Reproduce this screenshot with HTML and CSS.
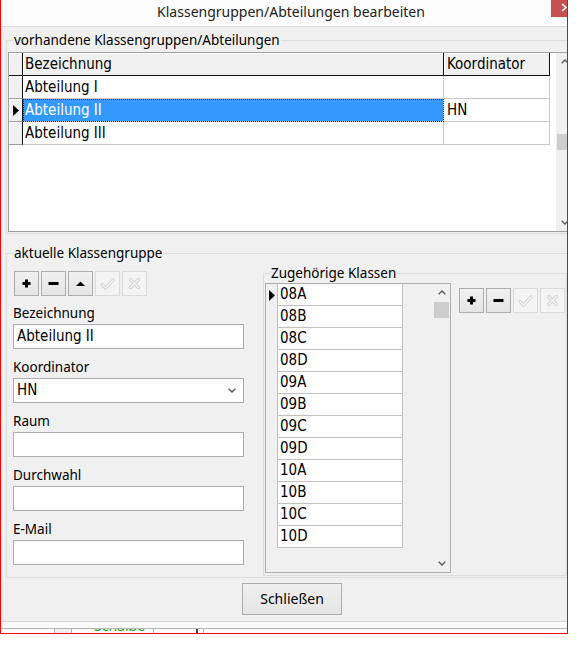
FILE: index.html
```html
<!DOCTYPE html>
<html lang="de">
<head>
<meta charset="utf-8">
<title>Klassengruppen/Abteilungen bearbeiten</title>
<link rel="stylesheet" href="styles.css">
</head>
<body>
<div class="window">
  <div class="titlebar">
    <div class="title">Klassengruppen/Abteilungen bearbeiten</div>
    <div class="close"><svg width="16" height="17" viewBox="0 0 16 17"><polyline points="11,4 15,7.5 11,11" fill="none" stroke="#fff" stroke-width="1.6"/></svg></div>
  </div>

  <div class="client">
    <div class="group g1">
      <span class="glabel">vorhandene Klassengruppen/Abteilungen</span>
      <div class="grid">
        <div class="grid-data">
          <div class="grow ghead"><div class="ind"></div><div class="c1">Bezeichnung</div><div class="c2">Koordinator</div></div>
          <div class="grow"><div class="ind"></div><div class="c1">Abteilung I</div><div class="c2"></div></div>
          <div class="grow sel"><div class="ind"><svg width="6" height="11" viewBox="0 0 6 11"><polygon points="0,0 6,5.5 0,11" fill="#000"/></svg></div><div class="c1">Abteilung II</div><div class="c2">HN</div></div>
          <div class="grow"><div class="ind"></div><div class="c1">Abteilung III</div><div class="c2"></div></div>
        </div>
        <div class="vscroll">
          <div class="sbtn"><svg width="8" height="5" viewBox="0 0 8 5"><polyline points="0.7,4.3 4,1 7.3,4.3" fill="none" stroke="#606060" stroke-width="1.5"/></svg></div>
          <div class="g-spacer"></div>
          <div class="thumb"></div>
          <div class="sfill"></div>
          <div class="sbtn"><svg width="8" height="5" viewBox="0 0 8 5"><polyline points="0.7,0.7 4,4 7.3,0.7" fill="none" stroke="#606060" stroke-width="1.5"/></svg></div>
        </div>
      </div>
    </div>

    <div class="group g2">
      <span class="glabel">aktuelle Klassengruppe</span>
      <div class="g2-body">
        <div class="form">
          <div class="toolbar tb-left">
            <div class="tbtn"><svg width="23" height="23" viewBox="0 0 23 23"><rect x="7.5" y="10" width="8" height="3" fill="#000"/><rect x="10" y="7.5" width="3" height="8" fill="#000"/></svg></div>
            <div class="tbtn"><svg width="23" height="23" viewBox="0 0 23 23"><rect x="6.5" y="10" width="10" height="3" fill="#000"/></svg></div>
            <div class="tbtn"><svg width="23" height="23" viewBox="0 0 23 23"><polygon points="7,14 16,14 11.5,9.5" fill="#000"/></svg></div>
            <div class="tbtn off"><svg width="23" height="23" viewBox="0 0 23 23"><path d="M6 12.5 L9.5 16 L17 8" fill="none" stroke="#cfcfcf" stroke-width="3.2" stroke-linejoin="round" stroke-linecap="round"/><path d="M6 12.5 L9.5 16 L17 8" fill="none" stroke="#f8f8f8" stroke-width="1.4" stroke-linejoin="round" stroke-linecap="round"/></svg></div>
            <div class="tbtn off"><svg width="23" height="23" viewBox="0 0 23 23"><path d="M7.5 7.5 L15.5 15.5 M15.5 7.5 L7.5 15.5" fill="none" stroke="#cfcfcf" stroke-width="3.2" stroke-linecap="round"/><path d="M7.5 7.5 L15.5 15.5 M15.5 7.5 L7.5 15.5" fill="none" stroke="#f8f8f8" stroke-width="1.4" stroke-linecap="round"/></svg></div>
          </div>
          <div class="flabel first">Bezeichnung</div>
          <div class="input">Abteilung II</div>
          <div class="flabel">Koordinator</div>
          <div class="input select"><span>HN</span><svg width="8" height="5" viewBox="0 0 8 5"><polyline points="0.7,0.7 4,4 7.3,0.7" fill="none" stroke="#606060" stroke-width="1.5"/></svg></div>
          <div class="flabel">Raum</div>
          <div class="input"></div>
          <div class="flabel">Durchwahl</div>
          <div class="input"></div>
          <div class="flabel">E-Mail</div>
          <div class="input"></div>
        </div>

        <div class="group g3">
          <span class="glabel">Zugehörige Klassen</span>
          <div class="list">
            <div class="list-data">
              <div class="lrow"><div class="lind"><svg width="6" height="11" viewBox="0 0 6 11"><polygon points="0,0 6,5.5 0,11" fill="#000"/></svg></div><div class="lcell">08A</div></div>
              <div class="lrow"><div class="lind"></div><div class="lcell">08B</div></div>
              <div class="lrow"><div class="lind"></div><div class="lcell">08C</div></div>
              <div class="lrow"><div class="lind"></div><div class="lcell">08D</div></div>
              <div class="lrow"><div class="lind"></div><div class="lcell">09A</div></div>
              <div class="lrow"><div class="lind"></div><div class="lcell">09B</div></div>
              <div class="lrow"><div class="lind"></div><div class="lcell">09C</div></div>
              <div class="lrow"><div class="lind"></div><div class="lcell">09D</div></div>
              <div class="lrow"><div class="lind"></div><div class="lcell">10A</div></div>
              <div class="lrow"><div class="lind"></div><div class="lcell">10B</div></div>
              <div class="lrow"><div class="lind"></div><div class="lcell">10C</div></div>
              <div class="lrow"><div class="lind"></div><div class="lcell">10D</div></div>
            </div>
            <div class="vscroll lscroll">
              <div class="sbtn"><svg width="8" height="5" viewBox="0 0 8 5"><polyline points="0.7,4.3 4,1 7.3,4.3" fill="none" stroke="#606060" stroke-width="1.5"/></svg></div>
              <div class="thumb"></div>
              <div class="sfill"></div>
              <div class="sbtn"><svg width="8" height="5" viewBox="0 0 8 5"><polyline points="0.7,0.7 4,4 7.3,0.7" fill="none" stroke="#606060" stroke-width="1.5"/></svg></div>
            </div>
          </div>
          <div class="toolbar tb-right">
            <div class="tbtn"><svg width="23" height="23" viewBox="0 0 23 23"><rect x="7.5" y="10" width="8" height="3" fill="#000"/><rect x="10" y="7.5" width="3" height="8" fill="#000"/></svg></div>
            <div class="tbtn"><svg width="23" height="23" viewBox="0 0 23 23"><rect x="6.5" y="10" width="10" height="3" fill="#000"/></svg></div>
            <div class="tbtn off"><svg width="23" height="23" viewBox="0 0 23 23"><path d="M6 12.5 L9.5 16 L17 8" fill="none" stroke="#cfcfcf" stroke-width="3.2" stroke-linejoin="round" stroke-linecap="round"/><path d="M6 12.5 L9.5 16 L17 8" fill="none" stroke="#f8f8f8" stroke-width="1.4" stroke-linejoin="round" stroke-linecap="round"/></svg></div>
            <div class="tbtn off"><svg width="23" height="23" viewBox="0 0 23 23"><path d="M7.5 7.5 L15.5 15.5 M15.5 7.5 L7.5 15.5" fill="none" stroke="#cfcfcf" stroke-width="3.2" stroke-linecap="round"/><path d="M7.5 7.5 L15.5 15.5 M15.5 7.5 L7.5 15.5" fill="none" stroke="#f8f8f8" stroke-width="1.4" stroke-linecap="round"/></svg></div>
          </div>
        </div>
      </div>
    </div>
  </div>

  <div class="footer">
    <div class="btn-close">Schließen</div>
  </div>

  <div class="underlay">
    <div class="ul-row">
      <div class="ul-a"></div>
      <div class="ul-dd"></div>
      <div class="ul-text"><span>Schaibe</span></div>
      <div class="ul-b"></div>
      <div class="ul-slash"></div>
      <div class="ul-c"></div>
    </div>
  </div>
</div>
</body>
</html>
```

FILE: styles.css
```css
* { box-sizing: border-box; }
html, body { margin: 0; padding: 0; background: #fff; }
body {
  width: 577px;
  height: 646px;
  overflow: hidden;
  font-family: "Noto Sans", "Open Sans", sans-serif;
  font-size: 13.5px;
  color: #000;
}

.window {
  position: relative;
  width: 568px;
  height: 634px;
  border-left: 1px solid #f00;
  border-right: 1px solid #f00;
  border-bottom: 1px solid #f00;
  background: #f0f0f0;
  overflow: hidden;
}

.titlebar {
  height: 27px;
  background: #fcfcfc;
  border-bottom: 1px solid #dadada;
}
.title {
  width: 580px;
  text-align: center;
  line-height: 24px;
  font-size: 14px;
  color: #222;
  white-space: nowrap;
}
.close {
  position: absolute;
  top: 0;
  right: 0;
  width: 16px;
  height: 17px;
  background: #c75050;
}
.close svg { display: block; }

.client { padding: 13px 0 0 5px; }

.group {
  position: relative;
  border: 1px solid #dcdcdc;
}
.glabel {
  position: absolute;
  top: -10px;
  left: 6px;
  padding: 0 1px;
  background: #f0f0f0;
  line-height: 18px;
  white-space: nowrap;
}

/* ---------- group 1 : grid ---------- */
.g1 {
  width: 580px;
  padding: 11px 0 1px 1px;
}
.grid {
  width: 566px;
  height: 180px;
  border: 1px solid #a0a0a0;
  background: #fff;
  display: flex;
  font-family: "DejaVu Sans Condensed", "DejaVu Sans", sans-serif;
  font-stretch: condensed;
  font-size: 15px;
}
.grid-data { flex: 1; }
.grow { display: flex; height: 23px; }
.ind {
  width: 14px;
  background: #f0f0f0;
  border-right: 1px solid #101010;
  border-bottom: 1px solid #a0a0a0;
  box-shadow: inset 1px 1px 0 #fff;
  display: flex;
  align-items: center;
  justify-content: center;
}
.ind svg { display: block; }
.c1, .c2 {
  border-right: 1px solid #c8c8c8;
  border-bottom: 1px solid #c8c8c8;
  line-height: 22px;
  white-space: nowrap;
}
.c1 { width: 421px; padding-left: 2px; }
.c2 { width: 106px; padding-left: 3px; }
.ghead .ind { border-bottom-color: #101010; }
.ghead .c1, .ghead .c2 {
  background: #f0f0f0;
  border-right-color: #101010;
  border-bottom-color: #101010;
  box-shadow: inset 1px 1px 0 #fff;
}
.sel .c1 {
  background: #3399ff;
  color: #fff;
  outline: 1px dotted #3a2a10;
  outline-offset: -1px;
}

.vscroll {
  width: 17px;
  background: #f0f0f0;
  display: flex;
  flex-direction: column;
}
.sbtn {
  height: 17px;
  flex: none;
  display: flex;
  align-items: center;
  justify-content: center;
}
.sbtn svg { display: block; }
.g-spacer { height: 64px; flex: none; }
.thumb {
  height: 16px;
  flex: none;
  margin: 0 1px;
  background: #cdcdcd;
}
.sfill { flex: 1; }

/* ---------- group 2 ---------- */
.g2 {
  margin-top: 19px;
  width: 580px;
  padding: 17px 0 1px 6px;
}
.g2-body { display: flex; align-items: flex-start; }
.form { width: 231px; }

.toolbar { display: flex; gap: 2px; }
.tb-left { margin-left: 1px; }
.tbtn {
  width: 25px;
  height: 25px;
  border: 1px solid #acacac;
  background: linear-gradient(#f0f0f0, #e5e5e5);
}
.tbtn svg { display: block; }
.tbtn.off {
  border-color: #d9d9d9;
  background: #f4f4f4;
}

.flabel {
  padding-top: 8px;
  line-height: 20px;
  margin-bottom: 1px;
  white-space: nowrap;
}
.flabel.first { padding-top: 7px; }

.input {
  height: 25px;
  border: 1px solid #abadb3;
  background: #fff;
  padding-left: 3px;
  line-height: 23px;
  font-family: "DejaVu Sans Condensed", "DejaVu Sans", sans-serif;
  font-stretch: condensed;
  font-size: 15px;
  white-space: nowrap;
}
.select {
  display: flex;
  align-items: center;
  justify-content: space-between;
  padding-right: 7px;
}
.select svg { display: block; }

/* ---------- group 3 : Zugehörige Klassen ---------- */
.g3 {
  margin-left: 19px;
  margin-top: 2px;
  width: 304px;
  height: 303px;
  padding: 9px 0 0 1px;
  display: flex;
  align-items: flex-start;
}
.list {
  width: 186px;
  height: 290px;
  border: 1px solid #adadad;
  display: flex;
  font-family: "DejaVu Sans Condensed", "DejaVu Sans", sans-serif;
  font-stretch: condensed;
  font-size: 15px;
}
.list-data { flex: 1; background: #f0f0f0; }
.lrow { display: flex; height: 22px; }
.lind {
  width: 12px;
  border-right: 1px solid #c0c0c0;
  display: flex;
  align-items: center;
  justify-content: center;
}
.lind svg { display: block; }
.lcell {
  width: 125px;
  background: #fff;
  border-right: 1px solid #c0c0c0;
  border-bottom: 1px solid #c0c0c0;
  padding-left: 2px;
  line-height: 21px;
}
.lscroll .thumb { margin-top: 1px; }
.tb-right { margin-left: 8px; margin-top: 5px; }

/* ---------- footer ---------- */
.footer { padding: 5px 0 6px 241px; }
.btn-close {
  width: 100px;
  height: 32px;
  border: 1px solid #acacac;
  background: linear-gradient(#f0f0f0, #e5e5e5);
  text-align: center;
  line-height: 30px;
  font-size: 14px;
}

/* ---------- window underneath ---------- */
.underlay {
  border-top: 1px solid #d4d4d4;
  background: #fafafa;
  height: 12px;
  padding-top: 6px;
}
.ul-row {
  display: flex;
  height: 5px;
  border-top: 1px solid #b4b4b4;
  background: #fff;
}
.ul-a { width: 53px; }
.ul-dd {
  width: 18px;
  border-left: 1px solid #b4b4b4;
  border-right: 1px solid #b4b4b4;
  background: #f0f0f0;
}
.ul-text {
  width: 82px;
  padding-left: 22px;
  overflow: hidden;
  border-right: 1px solid #b4b4b4;
}
.ul-text span {
  display: block;
  margin-top: -11px;
  line-height: 16px;
  font-size: 14px;
  color: #1e9e1e;
  white-space: nowrap;
}
.ul-b { width: 42px; }
.ul-slash {
  width: 2px;
  background: #444;
}
.ul-c {
  width: 6px;
  border-right: 1px solid #b4b4b4;
}
```
